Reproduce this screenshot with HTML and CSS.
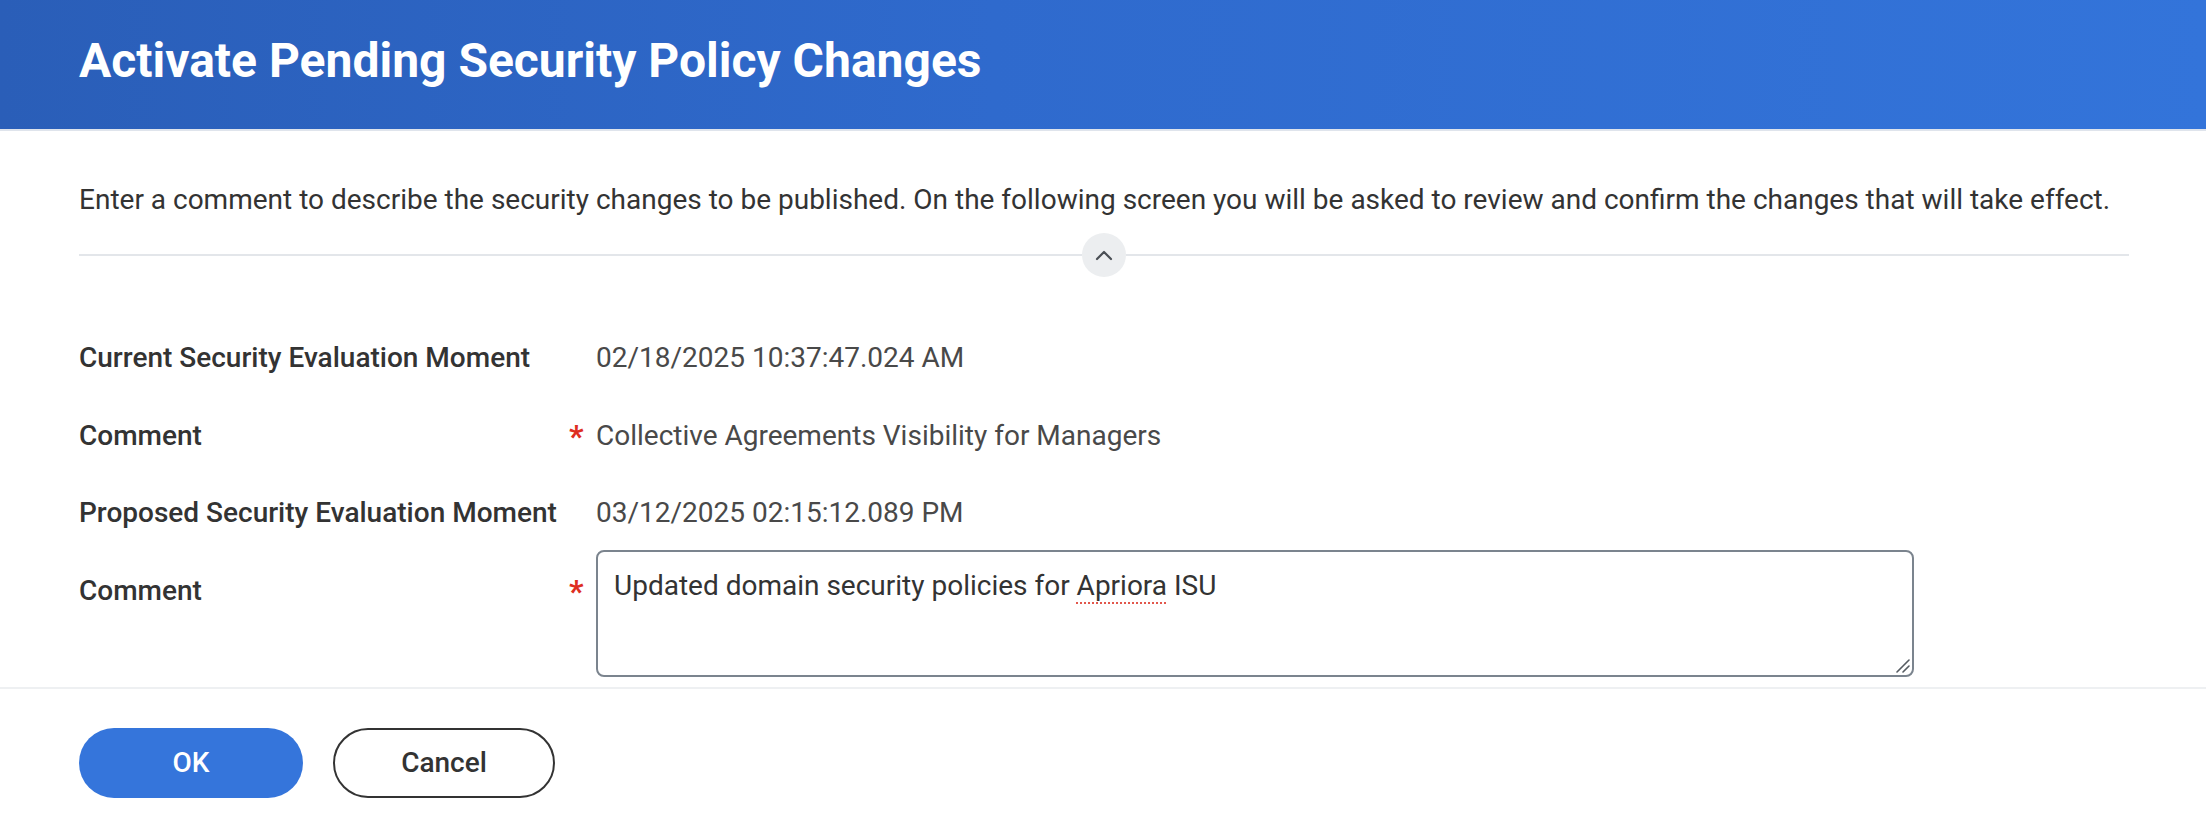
FILE: index.html
```html
<!DOCTYPE html>
<html lang="en">
<head>
<meta charset="utf-8">
<title>Activate Pending Security Policy Changes</title>
<link rel="stylesheet" href="styles.css">
</head>
<body>
<header class="page-header">
  <h1 class="page-title">Activate Pending Security Policy Changes</h1>
</header>
<main class="content">
  <p class="intro">Enter a comment to describe the security changes to be published. On the following screen you will be asked to review and confirm the changes that will take effect.</p>
  <div class="divider">
    <span class="divider-line"></span>
    <button class="collapse-btn" type="button" aria-label="Collapse">
      <svg width="18" height="12" viewBox="0 0 18 12"><path d="M2 10 L9 3 L16 10" fill="none" stroke="#4a4f55" stroke-width="2.2" stroke-linecap="round" stroke-linejoin="round"/></svg>
    </button>
    <span class="divider-line"></span>
  </div>
  <div class="form">
    <div class="form-row">
      <div class="label">Current Security Evaluation Moment</div>
      <div class="req"></div>
      <div class="value">02/18/2025 10:37:47.024 AM</div>
    </div>
    <div class="form-row">
      <div class="label">Comment</div>
      <div class="req">*</div>
      <div class="value">Collective Agreements Visibility for Managers</div>
    </div>
    <div class="form-row">
      <div class="label">Proposed Security Evaluation Moment</div>
      <div class="req"></div>
      <div class="value">03/12/2025 02:15:12.089 PM</div>
    </div>
    <div class="form-row">
      <div class="label">Comment</div>
      <div class="req">*</div>
      <div class="value">
        <div class="textarea">Updated domain security policies for <span class="misspelled">Apriora</span> ISU
          <svg class="resize-grip" width="14" height="14" viewBox="0 0 14 14"><path d="M1 13 L13 1 M7 13 L13 7" stroke="#555b61" stroke-width="1.6" stroke-linecap="round"/></svg>
        </div>
      </div>
    </div>
  </div>
</main>
<footer class="actions">
  <button class="btn btn-primary" type="button">OK</button>
  <button class="btn btn-secondary" type="button">Cancel</button>
</footer>
</body>
</html>
```
FILE: styles.css
```css
* { box-sizing: border-box; }
html, body { margin: 0; padding: 0; }
body {
  width: 2206px;
  height: 814px;
  overflow: hidden;
  background: #ffffff;
  font-family: Roboto, "Liberation Sans", sans-serif;
  color: #333333;
}
.page-header {
  height: 131px;
  padding: 0 79px 8px;
  display: flex;
  align-items: center;
  background: linear-gradient(90deg, #2a5eb8 0%, #2f6acd 45%, #3374da 100%);
  border-bottom: 2px solid #dfe4ec;
}
.page-title {
  margin: 0;
  font-size: 48px;
  font-weight: 700;
  color: #ffffff;
  letter-spacing: 0;
}
.content {
  padding: 0 77px 0 79px;
}
.intro {
  margin: 49px 0 0;
  font-size: 28px;
  line-height: 40px;
  color: #333333;
}
.divider {
  margin-top: 13px;
  height: 44px;
  display: flex;
  align-items: center;
}
.divider-line {
  flex: 1;
  height: 2px;
  background: #e3e6ea;
}
.collapse-btn {
  width: 44px;
  height: 44px;
  border-radius: 50%;
  border: 0;
  padding: 0;
  background: #eceef0;
  display: flex;
  align-items: center;
  justify-content: center;
}
.form {
  margin-top: 61px;
  display: flex;
  flex-direction: column;
  gap: 37.5px;
}
.form-row {
  display: grid;
  grid-template-columns: 488px 29px 1fr;
  align-items: start;
  font-size: 28px;
  line-height: 40px;
}
.label {
  font-weight: 500;
  color: #333333;
}
.req {
  color: #de2e21;
  font-weight: 700;
  font-size: 32px;
  line-height: 40px;
  padding-left: 2px;
}
.value {
  color: #494949;
}
.textarea {
  position: relative;
  margin-top: -20.5px;
  width: 1318px;
  height: 127px;
  border: 2px solid #7b848e;
  border-radius: 8px;
  padding: 14px 16px;
  color: #333333;
  background: #ffffff;
}
.misspelled {
  text-decoration: underline dotted #e2574c;
  text-decoration-thickness: 2px;
  text-underline-offset: 7px;
}
.resize-grip {
  position: absolute;
  right: 2px;
  bottom: 2px;
}
.actions {
  margin-top: 9.5px;
  border-top: 2px solid #eef0f2;
  padding: 39px 79px 0;
  display: flex;
  gap: 30px;
}
.btn {
  min-width: 224px;
  height: 70px;
  border-radius: 35px;
  font-family: Roboto, "Liberation Sans", sans-serif;
  font-size: 28px;
  font-weight: 500;
  padding: 0 40px;
}
.btn-primary {
  background: #3575db;
  border: 0;
  color: #ffffff;
}
.btn-secondary {
  min-width: 222px;
  background: #ffffff;
  border: 2px solid #333333;
  color: #333333;
}
```
